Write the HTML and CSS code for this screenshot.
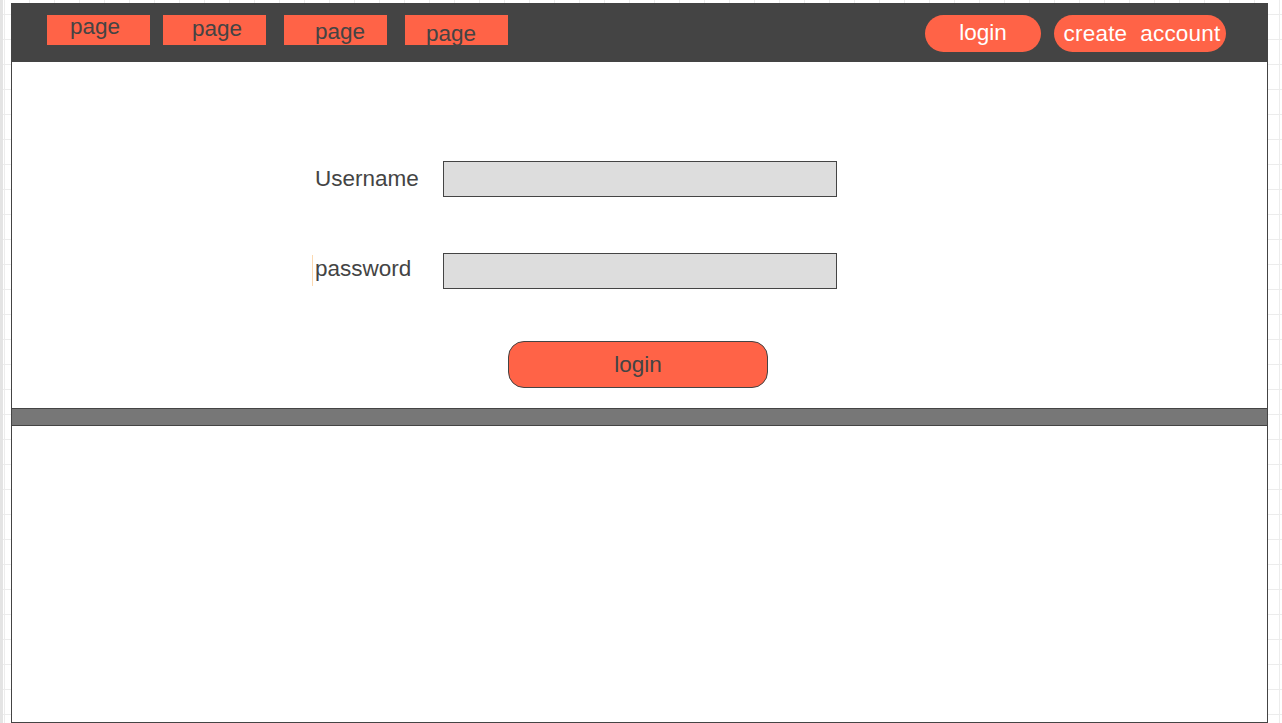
FILE: index.html
```html
<!DOCTYPE html>
<html>
<head>
<meta charset="utf-8">
<link rel="stylesheet" href="styles.css">
</head>
<body>
<div class="frame">
  <header class="topbar">
    <nav class="tabs">
      <a class="tab tab-1">page</a>
      <a class="tab tab-2">page</a>
      <a class="tab tab-3">page</a>
      <a class="tab tab-4">page</a>
    </nav>
    <div class="actions">
      <a class="pill pill-login">login</a>
      <a class="pill pill-create">create&nbsp; account</a>
    </div>
  </header>
  <main class="content">
    <form class="login-form">
      <label class="field-label">Username</label>
      <div class="field-input"></div>
      <label class="field-label field-label-pw">password</label>
      <div class="field-input"></div>
      <button type="button" class="submit">login</button>
    </form>
  </main>
  <div class="divider"></div>
  <section class="footer-area"></section>
</div>
</body>
</html>
```

FILE: styles.css
```css
html, body {
  margin: 0;
  padding: 0;
}

body {
  width: 1282px;
  height: 723px;
  overflow: hidden;
  font-family: "Liberation Sans", Arial, sans-serif;
  background-color: #ffffff;
  background-image:
    linear-gradient(to right, #e4e4e4 0, #e4e4e4 3px, transparent 3px),
    linear-gradient(to right, #ececec 1px, transparent 1px),
    linear-gradient(to bottom, #ececec 1px, transparent 1px);
  background-size: 100% 100%, 25px 25px, 25px 25px;
  background-position: 0 0, 4px 0, 0 14px;
  background-repeat: no-repeat, repeat, repeat;
  padding-top: 3px;
  padding-left: 11px;
  box-sizing: border-box;
}

.frame {
  width: 1257px;
  height: 720px;
  border: 1px solid #444444;
  box-sizing: border-box;
  background: #ffffff;
  display: flex;
  flex-direction: column;
}

.topbar {
  height: 58px;
  flex: none;
  background: #444444;
  display: flex;
  align-items: flex-start;
  padding: 11px 41px 0 35px;
  box-sizing: border-box;
}

.tabs {
  display: flex;
  align-items: flex-start;
}

.tab {
  display: block;
  width: 103px;
  height: 30px;
  background: #ff6347;
  color: #444444;
  font-size: 22.5px;
  line-height: 22px;
  text-align: center;
  box-sizing: border-box;
  white-space: nowrap;
}

.tab-1 { padding-top: 1px; padding-right: 7px; }
.tab-2 { padding-top: 3px; margin-left: 13px; padding-left: 5px; }
.tab-3 { padding-top: 6px; margin-left: 18px; padding-left: 9px; }
.tab-4 { padding-top: 8px; margin-left: 18px; padding-right: 11px; }

.actions {
  margin-left: auto;
  display: flex;
  gap: 13px;
}

.pill {
  display: block;
  height: 37px;
  border-radius: 18.5px;
  background: #ff6347;
  color: #ffffff;
  font-size: 22.5px;
  line-height: 35px;
  text-align: center;
  box-sizing: border-box;
  white-space: nowrap;
}

.pill-login {
  width: 116px;
}

.pill-create {
  width: 172px;
  padding-left: 4px;
  line-height: 37px;
  letter-spacing: 0.2px;
}

.content {
  height: 346px;
  flex: none;
  box-sizing: border-box;
  padding: 99px 0 0 303px;
}

.login-form {
  display: grid;
  grid-template-columns: 128px 394px;
  grid-auto-rows: 36px;
  row-gap: 56px;
  align-items: center;
  margin: 0;
}

.field-label {
  color: #444444;
  font-size: 22.5px;
  line-height: 24px;
  position: relative;
}

.field-label-pw {
  margin-top: -4px;
}

.field-label-pw::before {
  content: "";
  position: absolute;
  left: -3px;
  top: -2px;
  width: 1px;
  height: 31px;
  background: #fcd9b0;
}

.field-input {
  height: 36px;
  background: #dddddd;
  border: 1px solid #444444;
  box-sizing: border-box;
}

.submit {
  grid-column: 1 / span 2;
  margin: -4px 0 0 193px;
  width: 260px;
  height: 47px;
  background: #ff6347;
  border: 1px solid #444444;
  border-radius: 16px;
  color: #444444;
  font-family: "Liberation Sans", Arial, sans-serif;
  font-size: 22.5px;
  line-height: 24px;
  padding: 0;
  align-self: start;
}

.divider {
  height: 18px;
  flex: none;
  background: #777777;
  border-top: 1px solid #444444;
  border-bottom: 1px solid #444444;
  box-sizing: border-box;
}

.footer-area {
  flex: 1;
  background: #ffffff;
}
```
